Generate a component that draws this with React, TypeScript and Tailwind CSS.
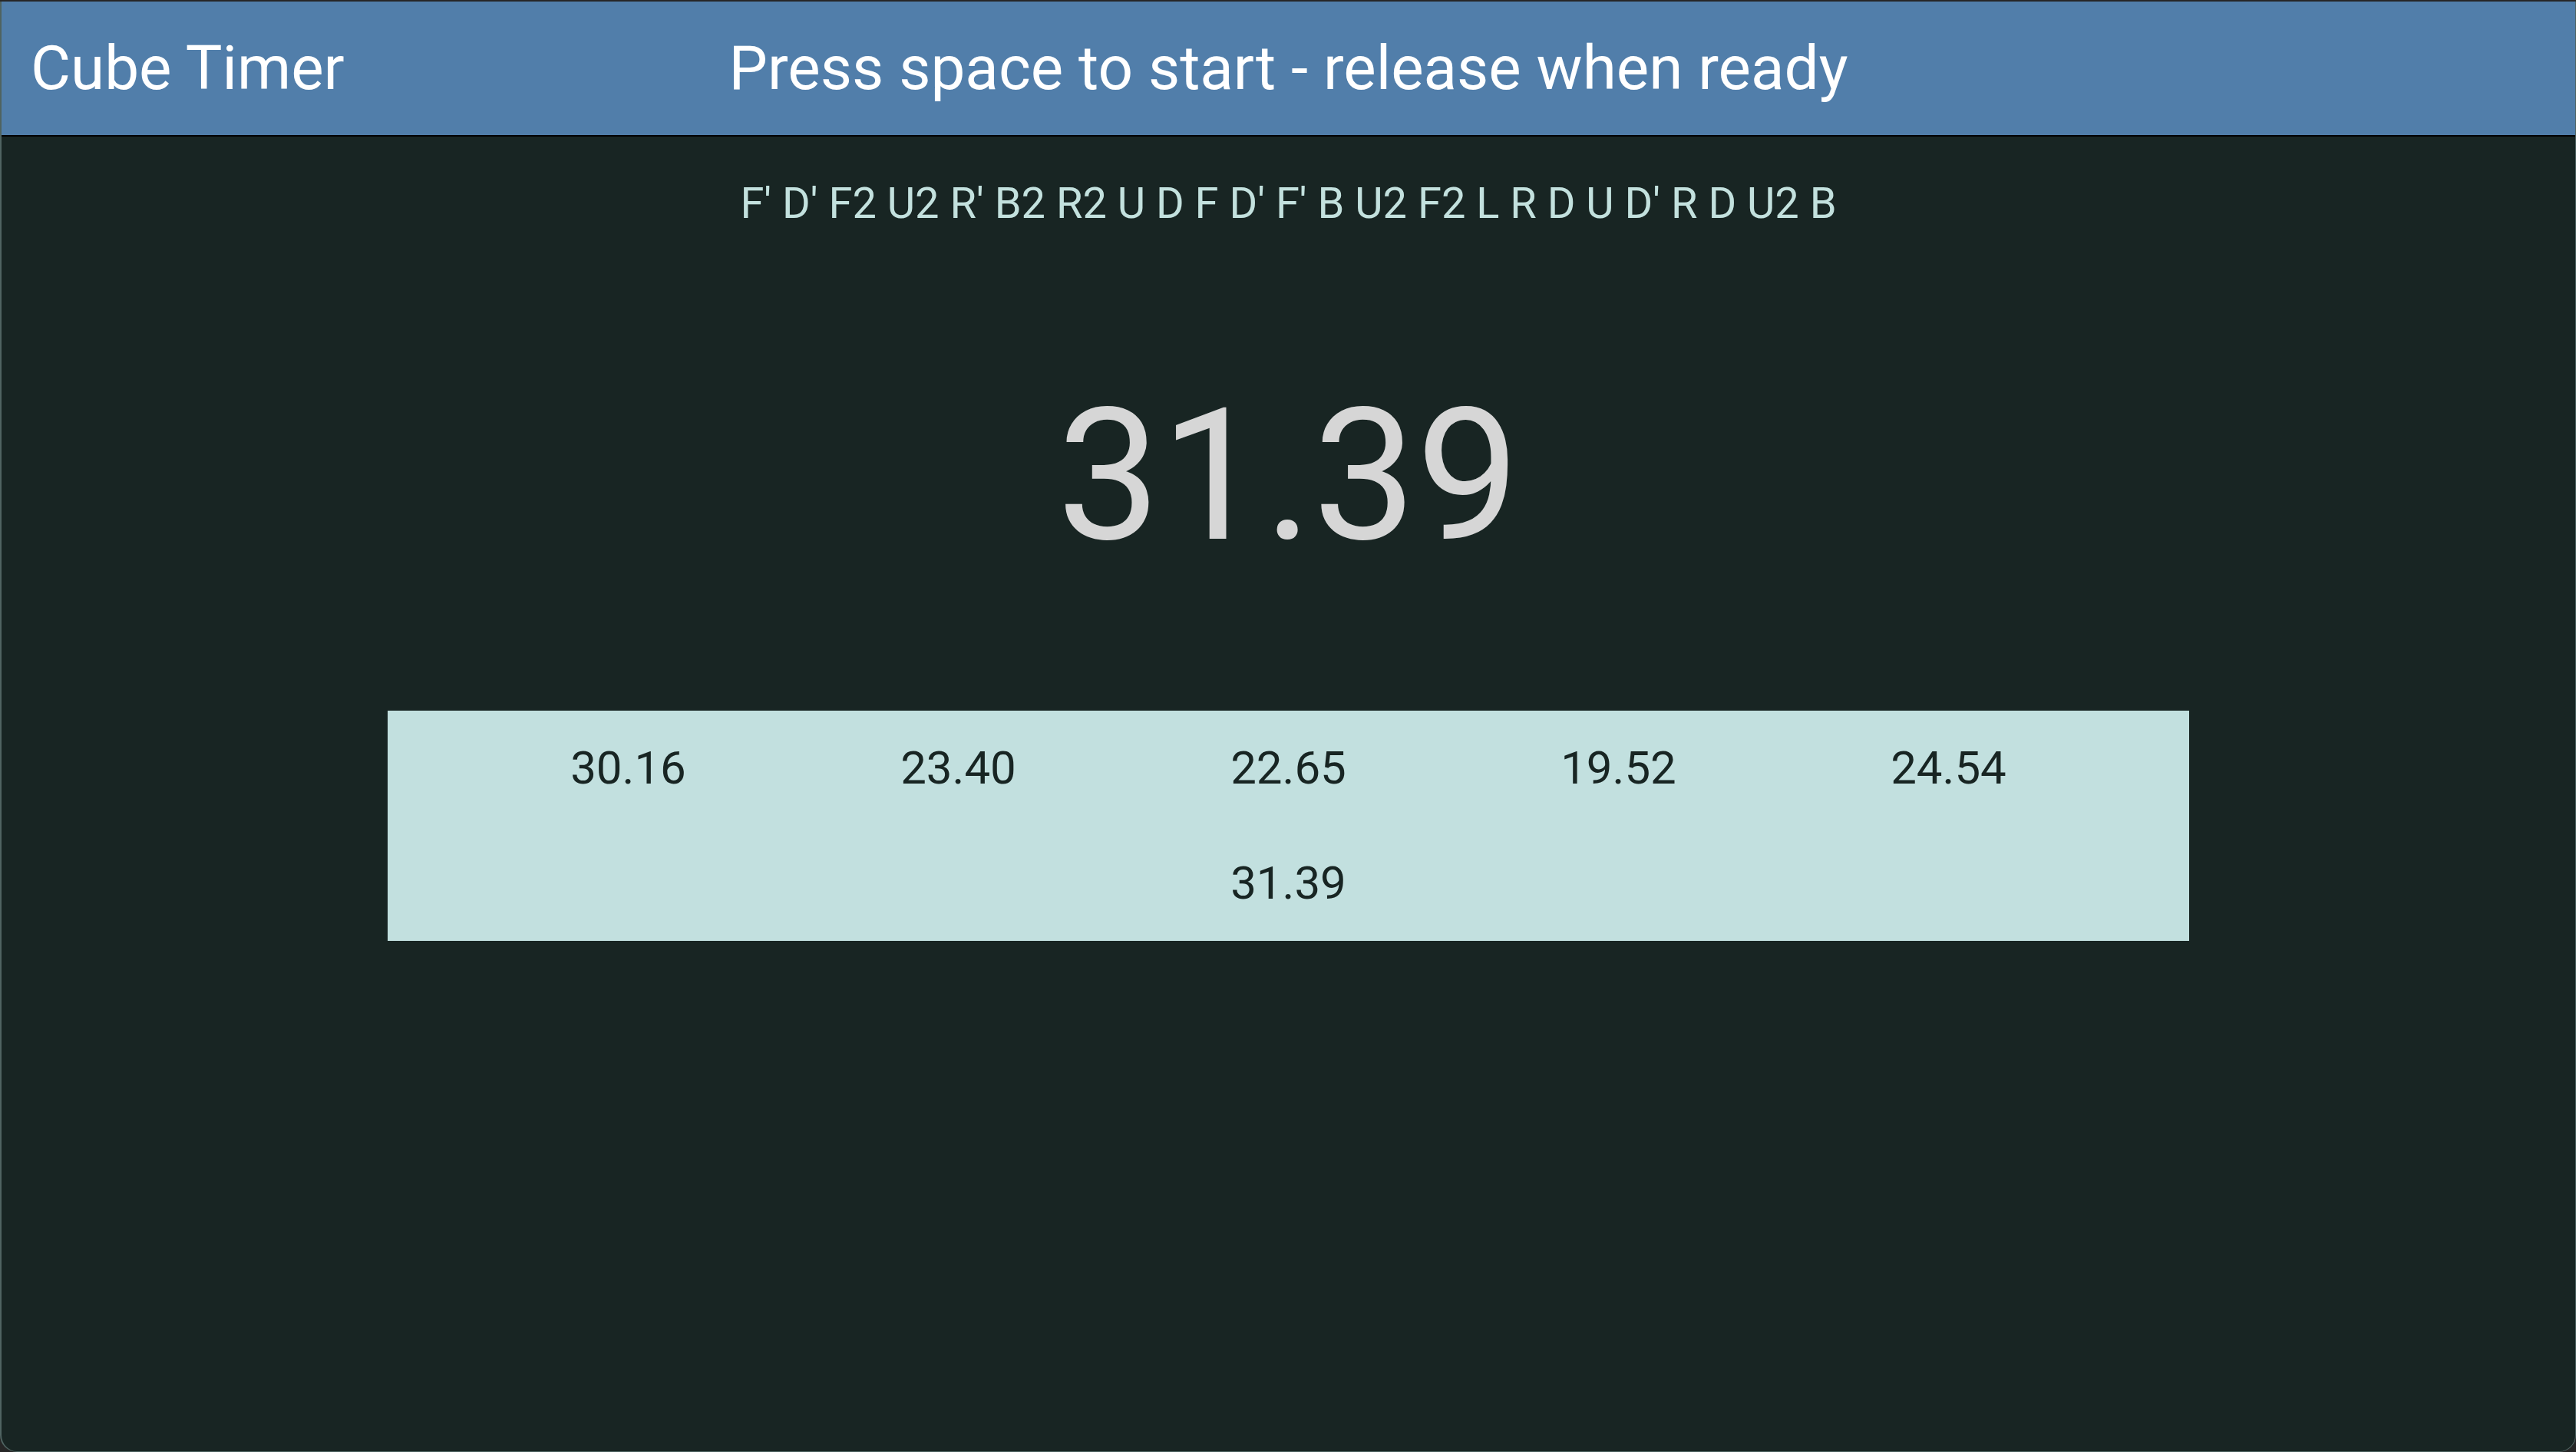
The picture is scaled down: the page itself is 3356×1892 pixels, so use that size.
const times = ["30.16", "23.40", "22.65", "19.52", "24.54", "31.39"];

const scramble = "F' D' F2 U2 R' B2 R2 U D F D' F' B U2 F2 L R D U D' R D U2 B";

export default function App() {
  return (
    <div className="h-screen w-full bg-[#262626] pt-[2px]" style={{ fontFamily: "Roboto, 'Noto Sans', sans-serif" }}>
      <div className="flex h-full flex-col overflow-hidden rounded-b-[22px] border-l-2 border-r border-b border-[#4f6361] bg-[#182523]">
        <header className="grid h-[176px] shrink-0 grid-cols-[1fr_auto_1fr] items-center border-b-2 border-black bg-[#517eaa] px-[38px] text-white">
          <h1 className="text-[80px] leading-none font-normal">Cube Timer</h1>
          <div className="text-[80px] leading-none">Press space to start - release when ready</div>
          <div />
        </header>

        <main className="flex flex-1 flex-col items-center">
          <div className="mt-[59px] text-[56px] leading-none text-[#c3e1de]">{scramble}</div>

          <div className="mt-[207px] text-[240px] leading-none text-[#d6d6d6]">31.39</div>

          <div className="mt-[186px] flex w-[70%] flex-wrap justify-center bg-[#c2e0df]">
            {times.map((t, i) => (
              <div key={i} className="flex h-[150px] w-[430px] items-center justify-center text-[60px] text-[#182523]">
                {t}
              </div>
            ))}
          </div>
        </main>
      </div>
    </div>
  );
}
